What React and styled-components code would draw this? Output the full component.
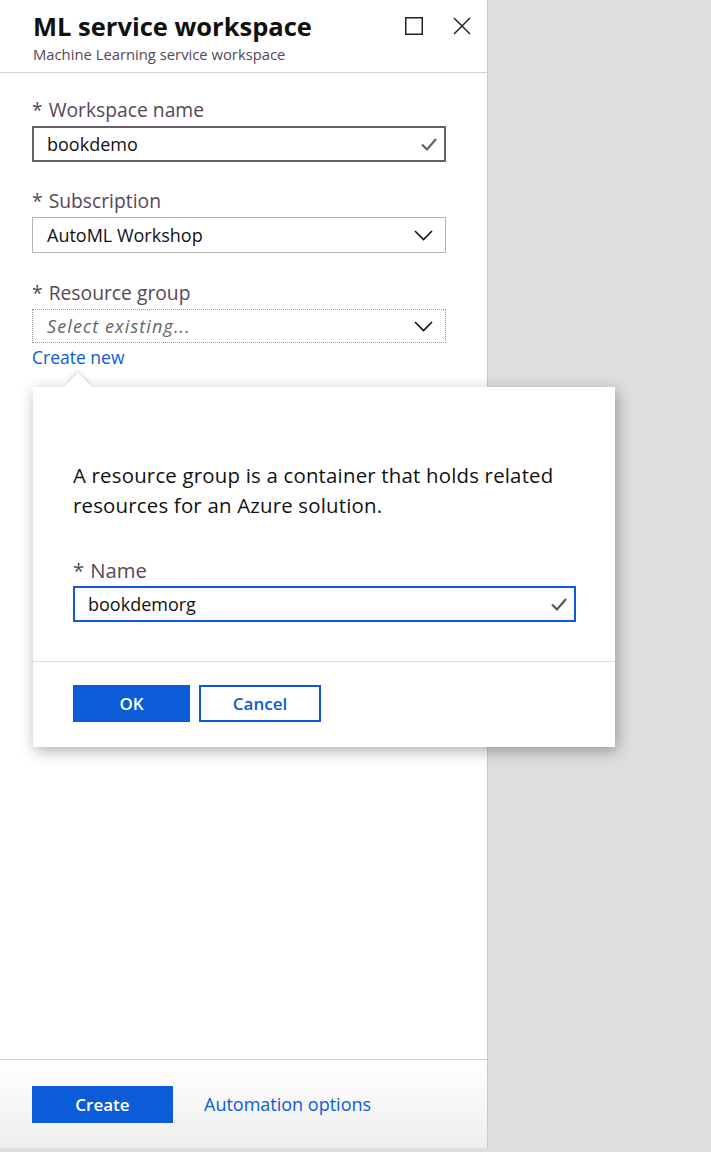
import styled, { createGlobalStyle } from "styled-components";

const GlobalStyle = createGlobalStyle`
  html, body {
    margin: 0;
    padding: 0;
    background: #dedede;
  }
  body {
    font-family: "Open Sans", "Noto Sans", "Liberation Sans", sans-serif;
    color: #111111;
  }
`;

const BLUE = "#0b5cd6";
const MAUVE = "#574757";

const Page = styled.div`
  display: flex;
  width: 711px;
  height: 1152px;
  background: #dedede;
`;

const Blade = styled.div`
  position: relative;
  width: 488px;
  height: 1148px;
  display: flex;
  flex-direction: column;
  background: #ffffff;
  border-right: 1px solid #c9c9c9;
  box-sizing: border-box;
`;

const Header = styled.div`
  display: flex;
  justify-content: space-between;
  padding: 10px 16px 8px 33px;
  border-bottom: 1px solid #d2d2d2;
`;

const Title = styled.h1`
  margin: 0;
  font-size: 25.5px;
  line-height: 32px;
  font-weight: 700;
  color: #111111;
`;

const Subtitle = styled.div`
  margin-top: 2px;
  font-size: 14.8px;
  line-height: 20px;
  color: ${MAUVE};
`;

const HeaderIcons = styled.div`
  display: flex;
  gap: 30px;
  padding-top: 7px;
`;

const Body = styled.div`
  flex: 1;
  padding: 0 41px 0 32px;
`;

const Label = styled.div`
  margin-top: ${(p) => p.$top || 24}px;
  font-size: ${(p) => p.$size || 19.3}px;
  line-height: 26px;
  color: ${MAUVE};

  span {
    margin-right: 6px;
  }
`;

const Field = styled.div`
  position: relative;
  display: flex;
  align-items: center;
  justify-content: space-between;
  box-sizing: border-box;
  height: ${(p) => p.$h || 36}px;
  margin-top: 3px;
  padding: 0 ${(p) => (p.$check ? 6 : 12)}px 0 14px;
  border: 1px ${(p) => (p.$dotted ? "dotted" : "solid")} ${(p) => p.$border || "#b3b3b3"};
  outline: ${(p) => (p.$thick ? `1px solid ${p.$border}` : "none")};
  outline-offset: -2px;
  font-size: 18px;
  color: #111111;
`;

const Placeholder = styled.span`
  font-style: italic;
  letter-spacing: 1.1px;
  color: #666666;
`;

const Link = styled.div`
  margin-top: 3px;
  font-size: 17.5px;
  line-height: 22px;
  color: ${BLUE};
`;

const Anchor = styled.div`
  position: relative;
`;

const Popup = styled.div`
  position: absolute;
  z-index: 10;
  top: 41px;
  left: 1px;
  width: 582px;
  background: #ffffff;
  box-shadow: 2px 4px 14px rgba(0, 0, 0, 0.32);

  &::before {
    content: "";
    position: absolute;
    top: -10px;
    left: 35px;
    width: 20px;
    height: 20px;
    background: #ffffff;
    transform: rotate(45deg);
    box-shadow: -3px -3px 5px -2px rgba(0, 0, 0, 0.18);
  }
`;

const PopupBody = styled.div`
  padding: 73px 39px 39px 40px;
`;

const Info = styled.p`
  margin: 0;
  font-size: 20.4px;
  letter-spacing: 0.2px;
  line-height: 30px;
  color: #111111;
`;

const PopupFooter = styled.div`
  display: flex;
  gap: 9px;
  padding: 23px 40px 25px;
  border-top: 1px solid #dddddd;
`;

const Button = styled.button`
  box-sizing: border-box;
  width: ${(p) => p.$w}px;
  height: 37px;
  padding: 0;
  font-family: inherit;
  font-size: 17px;
  font-weight: 600;
  border: 2px solid ${BLUE};
  background: ${(p) => (p.$primary ? BLUE : "#ffffff")};
  color: ${(p) => (p.$primary ? "#ffffff" : BLUE)};
`;

const Footer = styled.div`
  display: flex;
  align-items: center;
  gap: 31px;
  height: 88px;
  padding: 0 32px;
  border-top: 1px solid #d4d4d4;
  background: linear-gradient(#ffffff, #eeeeee);
`;

const FooterLink = styled.span`
  font-size: 18px;
  color: ${BLUE};
`;

const Check = ({ color = "#6b5b6b" }) => (
  <svg width="20" height="20" viewBox="0 0 20 20">
    <path d="M3 10.5 L8 15.5 L17 5" fill="none" stroke={color} strokeWidth="2.2" />
  </svg>
);

const Chevron = () => (
  <svg width="19" height="11" viewBox="0 0 19 11">
    <path d="M1 1 L9.5 9.5 L18 1" fill="none" stroke="#111" strokeWidth="1.6" />
  </svg>
);

const MaxIcon = () => (
  <svg width="18" height="18" viewBox="0 0 18 18">
    <rect x="0.75" y="0.75" width="16.5" height="16.5" fill="none" stroke="#222" strokeWidth="1.5" />
  </svg>
);

const CloseIcon = () => (
  <svg width="18" height="18" viewBox="0 0 18 18">
    <path d="M1 1 L17 17 M17 1 L1 17" fill="none" stroke="#222" strokeWidth="1.5" />
  </svg>
);

export default function App() {
  return (
    <>
      <GlobalStyle />
      <Page>
        <Blade>
          <Header>
            <div>
              <Title>ML service workspace</Title>
              <Subtitle>Machine Learning service workspace</Subtitle>
            </div>
            <HeaderIcons>
              <MaxIcon />
              <CloseIcon />
            </HeaderIcons>
          </Header>

          <Body>
            <Label>
              <span>*</span>Workspace name
            </Label>
            <Field $border="#6b5b6b" $thick $check>
              bookdemo
              <Check />
            </Field>

            <Label $top={26}>
              <span>*</span>Subscription
            </Label>
            <Field>
              AutoML Workshop
              <Chevron />
            </Field>

            <Label $top={27}>
              <span>*</span>Resource group
            </Label>
            <Field $h={34} $dotted $border="#9a9a9a">
              <Placeholder>Select existing...</Placeholder>
              <Chevron />
            </Field>
            <Anchor>
              <Link>Create new</Link>
              <Popup>
                <PopupBody>
                  <Info>
                    A resource group is a container that holds related
                    <br />
                    resources for an Azure solution.
                  </Info>
                  <Label $top={37} $size={20.3}>
                    <span>*</span>Name
                  </Label>
                  <Field $border={BLUE} $thick $check>
                    bookdemorg
                    <Check color="#555" />
                  </Field>
                </PopupBody>
                <PopupFooter>
                  <Button $primary $w={117}>OK</Button>
                  <Button $w={122}>Cancel</Button>
                </PopupFooter>
              </Popup>
            </Anchor>
          </Body>

          <Footer>
            <Button $primary $w={141}>Create</Button>
            <FooterLink>Automation options</FooterLink>
          </Footer>
        </Blade>
      </Page>
    </>
  );
}
